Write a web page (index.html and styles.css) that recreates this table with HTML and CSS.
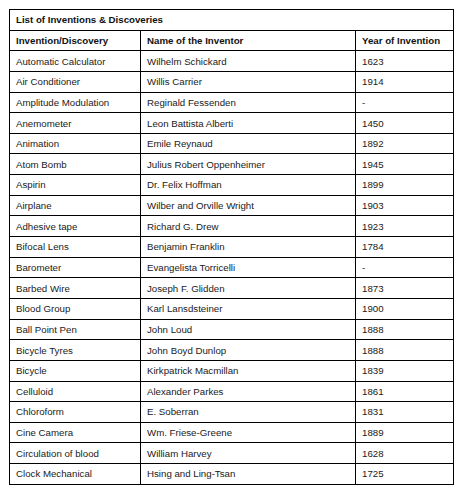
FILE: index.html
```html
<!DOCTYPE html>
<html>
<head>
<meta charset="utf-8">
<link rel="stylesheet" href="styles.css">
</head>
<body>
<table class="inv">
  <colgroup>
    <col class="c1"><col class="c2"><col class="c3">
  </colgroup>
  <tr><th class="title" colspan="3">List of Inventions &amp; Discoveries</th></tr>
  <tr><th>Invention/Discovery</th><th>Name of the Inventor</th><th>Year of Invention</th></tr>
  <tr><td>Automatic Calculator</td><td>Wilhelm Schickard</td><td>1623</td></tr>
  <tr><td>Air Conditioner</td><td>Willis Carrier</td><td>1914</td></tr>
  <tr><td>Amplitude Modulation</td><td>Reginald Fessenden</td><td>-</td></tr>
  <tr><td>Anemometer</td><td>Leon Battista Alberti</td><td>1450</td></tr>
  <tr><td>Animation</td><td>Emile Reynaud</td><td>1892</td></tr>
  <tr><td>Atom Bomb</td><td>Julius Robert Oppenheimer</td><td>1945</td></tr>
  <tr><td>Aspirin</td><td>Dr. Felix Hoffman</td><td>1899</td></tr>
  <tr><td>Airplane</td><td>Wilber and Orville Wright</td><td>1903</td></tr>
  <tr><td>Adhesive tape</td><td>Richard G. Drew</td><td>1923</td></tr>
  <tr><td>Bifocal Lens</td><td>Benjamin Franklin</td><td>1784</td></tr>
  <tr><td>Barometer</td><td>Evangelista Torricelli</td><td>-</td></tr>
  <tr><td>Barbed Wire</td><td>Joseph F. Glidden</td><td>1873</td></tr>
  <tr><td>Blood Group</td><td>Karl Lansdsteiner</td><td>1900</td></tr>
  <tr><td>Ball Point Pen</td><td>John Loud</td><td>1888</td></tr>
  <tr><td>Bicycle Tyres</td><td>John Boyd Dunlop</td><td>1888</td></tr>
  <tr><td>Bicycle</td><td>Kirkpatrick Macmillan</td><td>1839</td></tr>
  <tr><td>Celluloid</td><td>Alexander Parkes</td><td>1861</td></tr>
  <tr><td>Chloroform</td><td>E. Soberran</td><td>1831</td></tr>
  <tr><td>Cine Camera</td><td>Wm. Friese-Greene</td><td>1889</td></tr>
  <tr><td>Circulation of blood</td><td>William Harvey</td><td>1628</td></tr>
  <tr><td>Clock Mechanical</td><td>Hsing and Ling-Tsan</td><td>1725</td></tr>
</table>
</body>
</html>
```

FILE: styles.css
```css
html, body {
  margin: 0;
  padding: 0;
  background: #ffffff;
}
body {
  padding: 9px 0 0 9px;
  font-family: "Liberation Sans", Arial, sans-serif;
  font-size: 9.7px;
  color: #1a1a1a;
}
.inv {
  border-collapse: collapse;
  table-layout: fixed;
  width: 444px;
}
.c1 { width: 131px; }
.c2 { width: 215px; }
.c3 { width: 98px; }
.inv th, .inv td {
  border: 1px solid #000;
  height: 20.65px;
  padding: 0 5px 0 6px;
  box-sizing: border-box;
  text-align: left;
  vertical-align: middle;
  white-space: nowrap;
  line-height: 11px;
}
.inv th {
  font-weight: bold;
  color: #111;
}
```
